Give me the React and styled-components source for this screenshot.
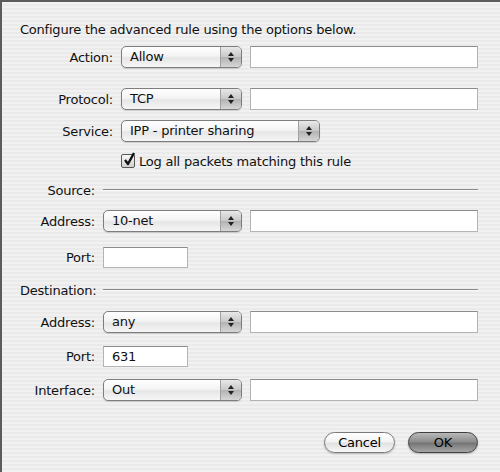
import React from "react"
import styled, { createGlobalStyle } from "styled-components"

const GlobalStyle = createGlobalStyle`
  html, body {
    margin: 0;
    padding: 0;
    background: #efefef;
  }
  body {
    font-family: "DejaVu Sans", "Liberation Sans", sans-serif;
    font-size: 13px;
    letter-spacing: -0.22px;
    color: #111;
  }
`

const Sheet = styled.div`
  box-sizing: border-box;
  width: 500px;
  height: 472px;
  padding: 20px 22px 0 0;
  border-left: 2px solid #5c5c5c;
  border-top: 2px solid #5c5c5c;
  background: repeating-linear-gradient(
    to bottom,
    #f1f1f1 0px,
    #f1f1f1 2px,
    #eaeaea 2px,
    #eaeaea 4px
  );
  display: flex;
  flex-direction: column;
  overflow: hidden;
`

const Title = styled.div`
  height: 16px;
  line-height: 16px;
  padding-left: 18px;
  white-space: nowrap;
`

const Row = styled.div`
  display: flex;
  align-items: center;
  gap: 8px;
  height: ${(p) => p.$h || 22}px;
  margin-top: ${(p) => p.$top}px;
`

const Label = styled.div`
  width: ${(p) => p.$w}px;
  flex: 0 0 ${(p) => p.$w}px;
  text-align: right;
  white-space: nowrap;
`

const SectionLabel = styled.div`
  width: ${(p) => p.$w}px;
  flex: 0 0 ${(p) => p.$w}px;
  padding-left: 18px;
  box-sizing: border-box;
  text-align: ${(p) => p.$align || "left"};
  white-space: nowrap;
`

const Rule = styled.div`
  flex: 1;
  height: 0;
  border-top: 1px solid #8a8a8a;
  border-bottom: 1px solid #f8f8f8;
`

const Popup = styled.div`
  box-sizing: border-box;
  width: ${(p) => p.$w}px;
  flex: 0 0 ${(p) => p.$w}px;
  height: 22px;
  border: 1px solid #7d7d7d;
  border-radius: 5px;
  background: linear-gradient(to bottom, #ffffff 0%, #f4f4f4 45%, #e6e6e6 55%, #f6f6f6 100%);
  box-shadow: 0 1px 1px rgba(0, 0, 0, 0.15);
  display: flex;
  align-items: stretch;
  overflow: hidden;
`

const PopupText = styled.div`
  flex: 1;
  padding-left: 8px;
  line-height: 20px;
  white-space: nowrap;
`

const PopupArrows = styled.div`
  width: 20px;
  border-left: 1px solid #a0a0a0;
  background: linear-gradient(to bottom, #e8e8e8 0%, #c9c9c9 48%, #b3b3b3 52%, #d6d6d6 100%);
  display: flex;
  align-items: center;
  justify-content: center;
`

const TextField = styled.div`
  box-sizing: border-box;
  flex: ${(p) => (p.$w ? `0 0 ${p.$w}px` : "1")};
  width: ${(p) => (p.$w ? `${p.$w}px` : "auto")};
  height: ${(p) => p.$h || 22}px;
  background: #fff;
  border: 1px solid #b4b4b4;
  border-top-color: #8c8c8c;
  padding-left: 8px;
  line-height: ${(p) => (p.$h || 22) - 2}px;
`

const CheckRow = styled.label`
  display: flex;
  align-items: center;
  gap: 4px;
  height: 16px;
  margin-top: 11px;
  padding-left: 119px;
  white-space: nowrap;
`

const Box = styled.span`
  box-sizing: border-box;
  width: 14px;
  height: 14px;
  border: 1px solid #555;
  border-radius: 2px;
  background: linear-gradient(to bottom, #fafafa, #d0d0d0);
  position: relative;
  display: inline-block;
  svg {
    position: absolute;
    left: 1px;
    top: -3px;
  }
`

const Buttons = styled.div`
  display: flex;
  justify-content: flex-end;
  gap: 13px;
  margin-top: 31px;
`

const Button = styled.div`
  box-sizing: border-box;
  width: ${(p) => p.$w}px;
  height: 21px;
  border-radius: 11px;
  border: 1px solid ${(p) => (p.$default ? "#3e3e3e" : "#7a7a7a")};
  background: ${(p) =>
    p.$default
      ? "linear-gradient(to bottom, #b9b9b9 0%, #8d8d8d 45%, #767676 55%, #a6a6a6 100%)"
      : "linear-gradient(to bottom, #ffffff 0%, #f3f3f3 45%, #e2e2e2 55%, #f7f7f7 100%)"};
  box-shadow: 0 1px 2px rgba(0, 0, 0, 0.25);
  text-align: center;
  line-height: 19px;
  color: #000;
`

const Arrows = () => (
  <svg width="8" height="12" viewBox="0 0 8 12">
    <path d="M4 1 L7 5 L1 5 Z" fill="#222" />
    <path d="M4 11 L7 7 L1 7 Z" fill="#222" />
  </svg>
)

const PopupButton = ({ w, value }) => (
  <Popup $w={w}>
    <PopupText>{value}</PopupText>
    <PopupArrows>
      <Arrows />
    </PopupArrows>
  </Popup>
)

export default function App() {
  return (
    <>
      <GlobalStyle />
      <Sheet>
        <Title>Configure the advanced rule using the options below.</Title>

        <Row $top={8}>
          <Label $w={111}>Action:</Label>
          <PopupButton w={121} value="Allow" />
          <TextField />
        </Row>
        <Row $top={20}>
          <Label $w={111}>Protocol:</Label>
          <PopupButton w={121} value="TCP" />
          <TextField />
        </Row>
        <Row $top={10}>
          <Label $w={111}>Service:</Label>
          <PopupButton w={199} value="IPP - printer sharing" />
        </Row>
        <CheckRow>
          <Box>
            <svg width="13" height="15" viewBox="0 0 13 15">
              <path
                d="M2 8 L5 12 L11 1"
                fill="none"
                stroke="#111"
                strokeWidth="2.4"
                strokeLinejoin="round"
              />
            </svg>
          </Box>
          Log all packets matching this rule
        </CheckRow>

        <Row $top={13} $h={16}>
          <SectionLabel $w={93} $align="right">Source:</SectionLabel>
          <Rule />
        </Row>
        <Row $top={12}>
          <Label $w={93}>Address:</Label>
          <PopupButton w={139} value="10-net" />
          <TextField />
        </Row>
        <Row $top={15} $h={21}>
          <Label $w={93}>Port:</Label>
          <TextField $w={85} $h={21} />
        </Row>

        <Row $top={14} $h={16}>
          <SectionLabel $w={93}>Destination:</SectionLabel>
          <Rule />
        </Row>
        <Row $top={13}>
          <Label $w={93}>Address:</Label>
          <PopupButton w={139} value="any" />
          <TextField />
        </Row>
        <Row $top={13} $h={21}>
          <Label $w={93}>Port:</Label>
          <TextField $w={85} $h={21}>631</TextField>
        </Row>
        <Row $top={12}>
          <Label $w={93}>Interface:</Label>
          <PopupButton w={139} value="Out" />
          <TextField />
        </Row>

        <Buttons>
          <Button $w={71}>Cancel</Button>
          <Button $w={70} $default>OK</Button>
        </Buttons>
      </Sheet>
    </>
  )
}
